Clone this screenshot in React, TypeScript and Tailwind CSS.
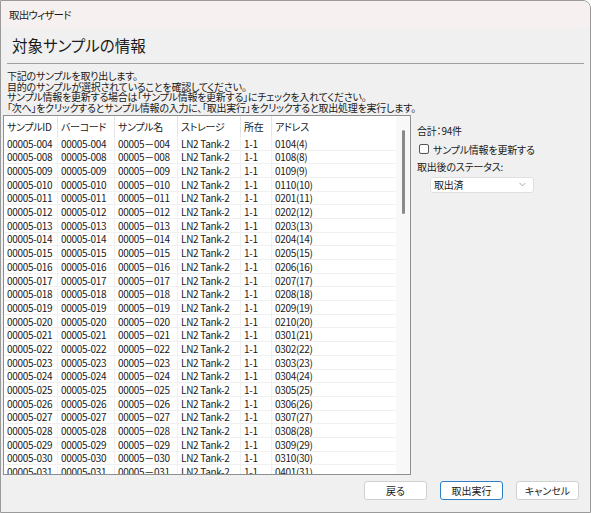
import { ChevronDown } from 'lucide-react';

type Row = { id: string; storage: string; place: string; address: string };

const nums = [4, 8, 9, ...Array.from({ length: 22 }, (_, i) => i + 10)];
const rows: Row[] = nums.map((n) => {
  const s = String(n).padStart(3, '0');
  const rack = Math.floor((n - 1) / 10) + 1;
  const pos = ((n - 1) % 10) + 1;
  return {
    id: `00005-${s}`,
    storage: 'LN2 Tank-2',
    place: '1-1',
    address: `${String(rack).padStart(2, '0')}${String(pos).padStart(2, '0')}(${n})`,
  };
});

const cols = [
  { label: 'サンプルID', w: 'w-[54px]' },
  { label: 'バーコード', w: 'w-[57px]' },
  { label: 'サンプル名', w: 'w-[63px]' },
  { label: 'ストレージ', w: 'w-[63px]' },
  { label: '所在', w: 'w-[31px]' },
  { label: 'アドレス', w: 'flex-1' },
];

const jp = "font-['Noto_Sans_CJK_JP','Noto_Sans',sans-serif] [font-feature-settings:'palt']";
const cell = 'h-full flex items-center pl-[3px] whitespace-nowrap';

function SampleTable() {
  return (
    <div className="flex w-[408px] h-[360px] bg-white border border-[#8f8f8f] overflow-hidden">
      <div className="flex-1 flex flex-col overflow-hidden text-[10px] tracking-[-0.3px] text-[#1a1a1a]">
        <div className="flex h-[21px] shrink-0 items-center">
          {cols.map((c, i) => (
            <div
              key={c.label}
              className={`${c.w} ${cell} ${i < cols.length - 1 ? 'border-r border-[#e5e5e5]' : ''}`}
            >
              {c.label}
            </div>
          ))}
        </div>
        {rows.map((r) => (
          <div key={r.id} className="flex h-[13.7px] shrink-0 items-center leading-[13px] border-b border-[#f0f0f0]">
            <div className={`w-[54px] ${cell} border-r border-[#f0f0f0]`}>{r.id}</div>
            <div className={`w-[57px] ${cell} border-r border-[#f0f0f0]`}>{r.id}</div>
            <div className={`w-[63px] ${cell} border-r border-[#f0f0f0]`}>{r.id.replace('-', '－')}</div>
            <div className={`w-[63px] ${cell} border-r border-[#f0f0f0]`}>{r.storage}</div>
            <div className={`w-[31px] ${cell} border-r border-[#f0f0f0]`}>{r.place}</div>
            <div className={`flex-1 ${cell}`}>{r.address}</div>
          </div>
        ))}
      </div>
      <div className="w-[14px] shrink-0 bg-[#f8f8f8] flex justify-center pt-[14px]">
        <div className="w-[3px] h-[84px] rounded-full bg-[#8a8a8a]" />
      </div>
    </div>
  );
}

export default function App() {
  return (
    <div className={`w-[591px] h-[513px] bg-[#f0f0f0] border border-[#9a9a9a] rounded-tr-[8px] overflow-hidden flex flex-col text-[#1a1a1a] ${jp}`}>
      <div className="h-[27px] shrink-0 bg-[#f6f1f0] flex items-center pl-[8px] text-[10.5px] tracking-[-0.8px]">取出ウィザード</div>

      <div className="h-[35px] shrink-0 flex items-center pl-[11px] text-[15.5px]">対象サンプルの情報</div>
      <div className="mx-[6px] border-t border-[#a0a0a0]" />

      <div className="pl-[6px] pt-[7px] text-[10px] tracking-[-0.25px] leading-[10.7px]">
        <p>下記のサンプルを取り出します。</p>
        <p>目的のサンプルが選択されていることを確認してください。</p>
        <p>サンプル情報を更新する場合は「サンプル情報を更新する」にチェックを入れてください。</p>
        <p>「次へ」をクリックするとサンプル情報の入力に、「取出実行」をクリックすると取出処理を実行します。</p>
      </div>

      <div className="flex pl-[2px] pt-[1px]">
        <SampleTable />
        <div className="flex flex-col pl-[6px] pt-[8px] text-[10px] tracking-[-0.2px]">
          <div>合計：94件</div>
          <label className="flex items-center gap-[4px] mt-[4px] ml-[2px]">
            <span className="w-[10px] h-[10px] border border-[#555] rounded-[2px] bg-white" />
            サンプル情報を更新する
          </label>
          <div className="mt-[2px]">取出後のステータス:</div>
          <div className="mt-[3px] ml-[13px] w-[104px] h-[16px] bg-white border border-[#e0e0e0] rounded-[3px] flex items-center justify-between pl-[3px] pr-[5px]">
            <span>取出済</span>
            <ChevronDown size={11} strokeWidth={1.2} className="text-[#666]" />
          </div>
        </div>
      </div>

      <div className="flex justify-end gap-[13px] pr-[11px] pt-[6px] text-[10px]">
        <button className="w-[63px] h-[19px] bg-white border border-[#d0d0d0] rounded-[3px]">戻る</button>
        <button className="w-[63px] h-[19px] bg-white border border-[#2f7fc6] rounded-[3px]">取出実行</button>
        <button className="w-[63px] h-[19px] bg-white border border-[#d0d0d0] rounded-[3px]">キャンセル</button>
      </div>
    </div>
  );
}
